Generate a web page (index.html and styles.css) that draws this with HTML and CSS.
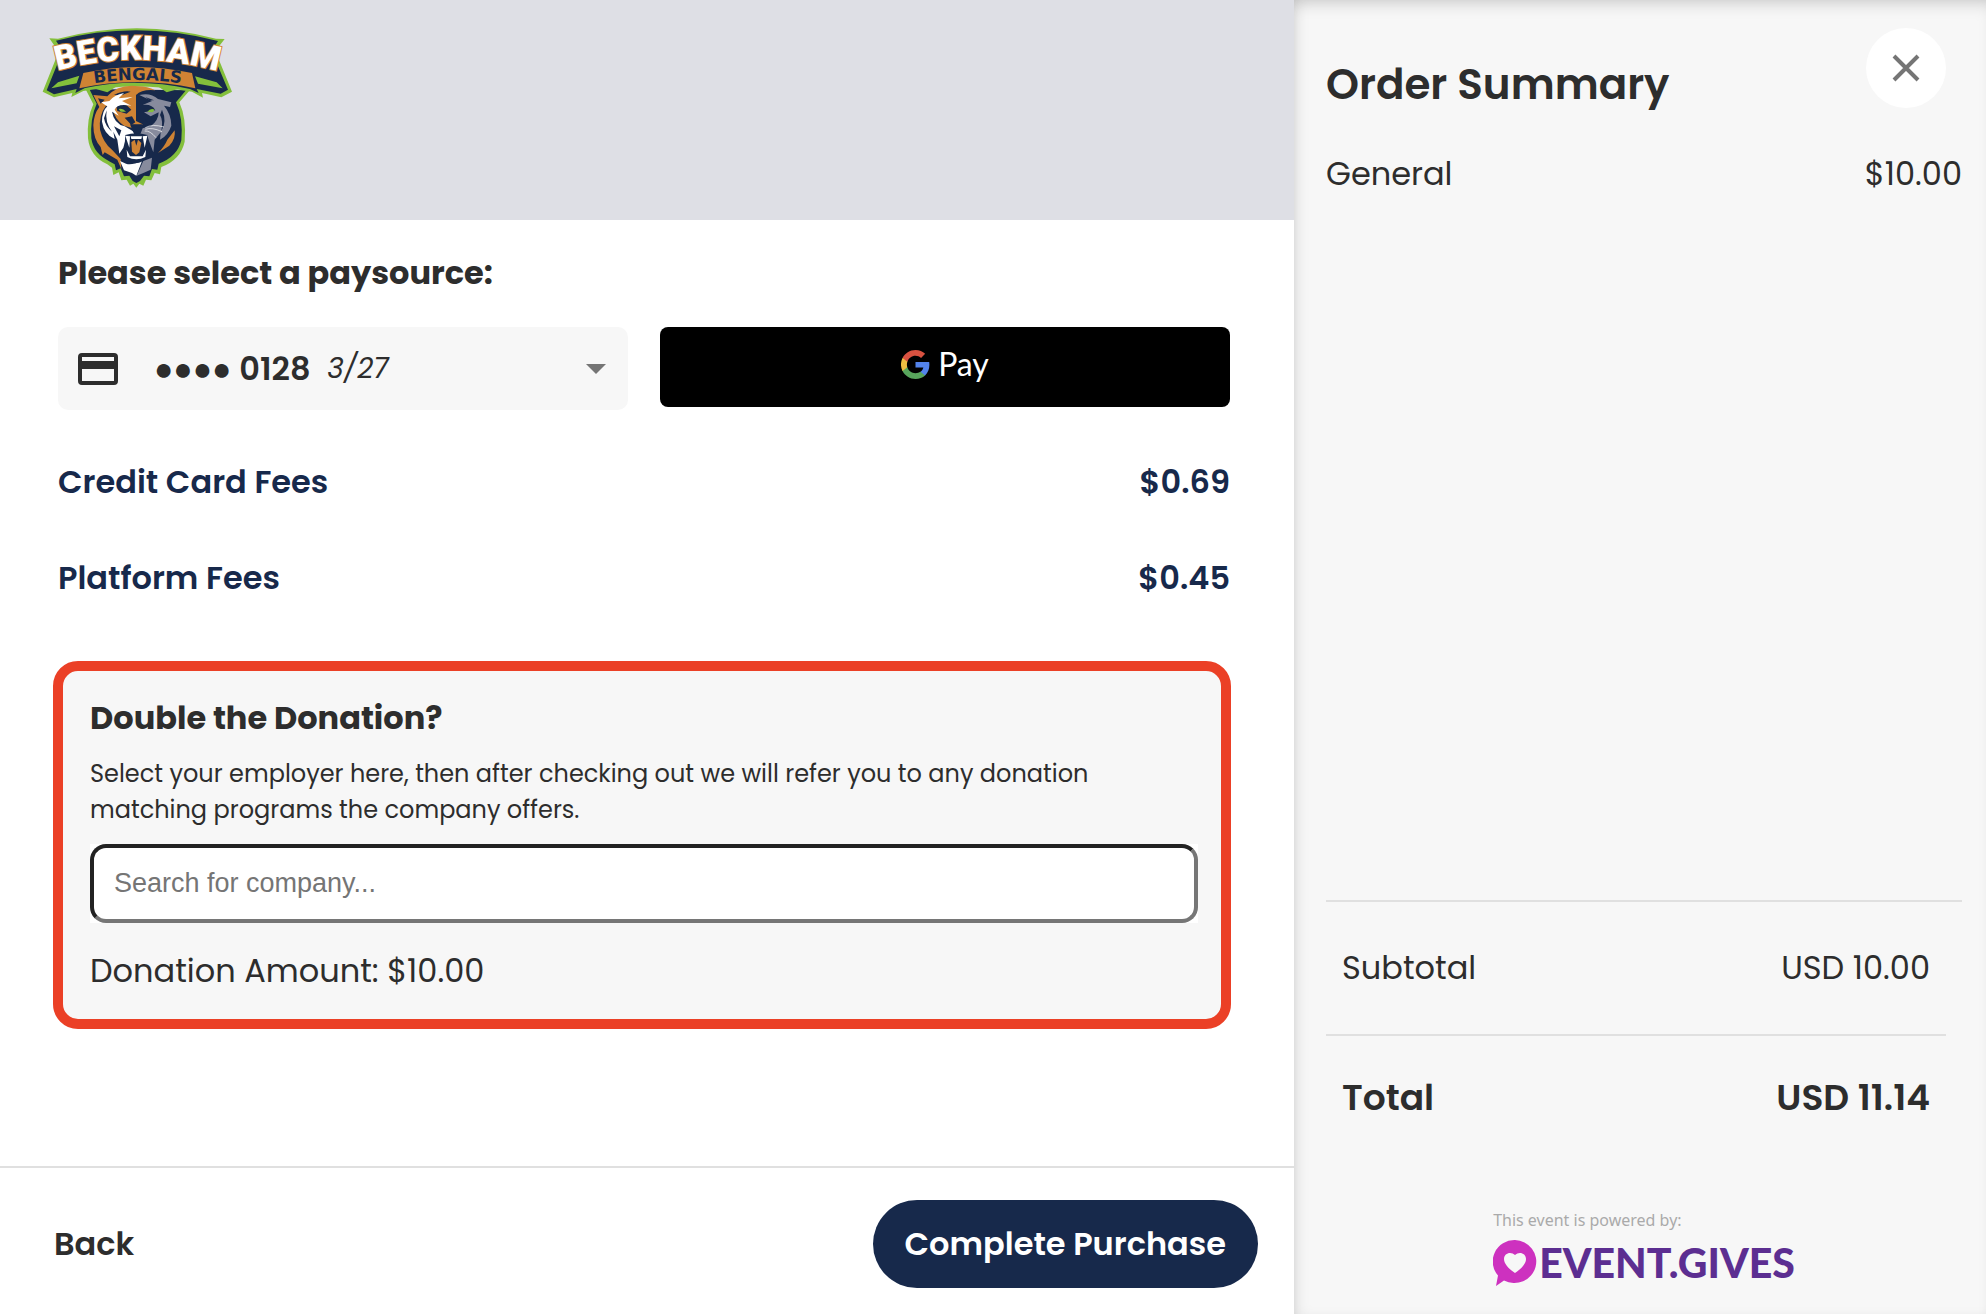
FILE: index.html
```html
<!DOCTYPE html>
<html lang="en">

<head>
    <meta charset="UTF-8">
    <meta name="viewport" content="width=device-width, initial-scale=1.0">
    <title>Checkout</title>
    <link rel="stylesheet" href="styles.css">
</head>

<body>
    <div class="checkout">
        <div class="payment">
            <header class="banner">
                <svg class="team-logo" viewBox="0 0 660 555" role="img" aria-label="Beckham Bengals">
                    <!-- head outline -->
                    <path fill="#83bf3b" d="M168 225 L190 268 Q170 310 174 370 Q180 425 232 448 L246 458 L250 480 L266 472 L274 496 L290 494 L300 512 L310 506 L319 518 L328 506 L340 512 L348 494 L364 496 L374 474 L390 478 L394 456 Q452 434 464 380 Q470 310 448 262 L480 225Z" />
                    <path fill="#17294b" d="M178 222 L200 266 Q180 310 184 370 Q190 416 240 440 L254 448 L258 466 L272 460 L282 484 L298 482 L308 498 L319 504 L330 498 L342 482 L358 484 L366 462 L382 464 L386 446 Q442 426 454 376 Q460 310 438 262 L468 226Z" />
                    <!-- banner -->
                    <path fill="#83bf3b" d="M58 70 L84 71 Q320 8 558 71 L584 72 L556 108 L606 230 L574 247 L516 234 L519 248 L486 230 Q320 200 160 228 L124 246 L127 234 L72 247 L38 230 L86 110Z" />
                    <path fill="#17294b" d="M78 77 Q320 14 564 78 L545 108 L594 224 L572 236 L500 222 L506 234 L480 222 Q320 186 165 219 L136 234 L140 222 L72 238 L50 226 L98 108Z" />
                    <path fill="#83bf3b" d="M84 202 L148 182 L140 205 L64 220Z M495 184 L560 202 L578 220 L504 206Z M190 220 L270 208 L232 232Z M374 208 L452 220 L410 232Z" />
                    <path fill="#cf8334" d="M160 174 Q320 138 486 174 L496 220 Q320 182 148 220Z" />
                    <path id="arc-top" fill="none" d="M80 168 Q320 100 566 170" />
                    <path id="arc-bottom" fill="none" d="M156 212 Q320 178 490 212" />
                    <text class="logo-name"><textPath href="#arc-top" startOffset="50%">BECKHAM</textPath></text>
                    <text class="logo-team"><textPath href="#arc-bottom" startOffset="50%">BENGALS</textPath></text>
                    <!-- orange half -->
                    <path fill="#cf8334" d="M190 240 L232 244 Q266 206 326 214 Q352 214 376 226 Q336 222 318 240 L318 318 L338 328 L322 352 L304 338 L282 332 Q252 312 250 282 L228 272 Q206 300 210 344 Q220 384 246 404 L272 432 L274 462 L262 434 L224 412 L218 420 L212 396 Q190 372 190 330 Q192 296 208 276Z" />
                    <path fill="#17294b" d="M204 250 L224 254 L212 266Z M252 240 Q280 226 302 230 L276 240Z M256 262 Q284 260 304 284 L290 296 L262 288Z M284 308 L306 304 L316 322 L304 330Z" />
                    <!-- white half -->
                    <path fill="#fff" d="M222 268 L214 262 L238 258 Q252 240 282 234 L266 250 L308 246 L276 258 L304 272 Q260 264 254 284 L266 302 L246 290 Q252 326 284 334 L308 348 L314 360 L290 362 L280 398 L268 416 L262 374 L250 350 L254 372 Q222 358 216 320 Q216 288 232 274Z" />
                    <path fill="#17294b" d="M230 286 Q224 322 246 350 Q226 334 222 310Z M252 334 L274 346 L268 364Z" />
                    <path fill="#fff" d="M270 438 L288 446 Q304 452 336 438 L319 482 L306 474 L282 466Z" />
                    <!-- grey half -->
                    <path fill="#878b9d" d="M328 240 Q362 232 384 252 L424 262 L420 276 L402 272 Q424 298 424 332 Q414 362 390 374 L392 352 L374 374 L370 412 L358 380 L352 362 L330 360 L338 340 L362 334 Q386 316 386 292 L362 304 L342 292 L376 286 Q366 266 338 270 L366 258Z M340 438 L366 428 L362 464 L340 474 L320 482Z" />
                    <path fill="#17294b" d="M346 246 L372 256 L358 256Z M396 284 Q412 320 394 348 Q400 316 390 300Z M346 314 L370 304 L356 326Z" />
                    <path fill="#cf8334" d="M434 346 Q438 372 418 392 L384 414 Q404 394 412 374Z" />
                    <path fill="none" stroke="#fff" stroke-width="2" d="M346 338 Q366 326 402 336 M346 343 Q366 336 396 350 M344 348 Q360 346 378 368" />
                    <path fill="#83bf3b" d="M266 282 Q278 278 288 290 L272 290Z M352 290 Q362 278 374 284 L368 292Z" />
                    <!-- mouth -->
                    <path fill="#17294b" d="M300 328 L338 328 L330 348 L319 356 L308 348Z M286 360 Q319 350 352 360 L358 420 Q340 444 319 444 Q296 444 282 420Z" />
                    <path fill="#cf8334" d="M304 382 L314 374 L319 392 L324 374 L334 384 L328 412 L318 420 L306 410Z" />
                    <path fill="#fff" d="M286 362 L300 364 L298 398Z M338 364 L352 362 L344 398Z M302 364 L336 364 L334 372 L304 372Z M290 404 L300 424 L338 424 L348 404 L346 426 Q319 440 292 426Z" />
                </svg>
            </header>

            <main class="content">
                <label class="heading" for="paysource">Please select a paysource:</label>
                <div class="pay-row">
                    <div class="pay-select">
                        <svg class="card-icon" viewBox="0 0 40 32" aria-hidden="true">
                            <path fill="#2d2d2d" fill-rule="evenodd" d="M4 0H36A4 4 0 0 1 40 4V28A4 4 0 0 1 36 32H4A4 4 0 0 1 0 28V4A4 4 0 0 1 4 0ZM4 4V8H36V4ZM4 16V28H36V16Z" />
                        </svg>
                        <span class="dots">●●●●</span>
                        <select id="paysource">
                            <option>0128</option>
                        </select>
                        <em class="expiry">3/27</em>
                        <svg class="caret" viewBox="0 0 20 10" aria-hidden="true">
                            <path fill="#757575" d="M0 0H20L10 10Z" />
                        </svg>
                    </div>
                    <button class="gpay" type="button">
                        <svg class="google-icon" viewBox="0 0 48 48" aria-hidden="true">
                            <path fill="#5383ec" d="M47 24.5c0-1.600-.2-3.200-.4-4.600H24v9h13c-.6 3-2.300 5.500-4.800 7.200v6h7.700C44.400 38 47 31.800 47 24.500z" />
                            <path fill="#58a55c" d="M24 48c6.500 0 11.900-2.100 15.900-5.800l-7.700-6c-2.200 1.400-4.900 2.300-8.200 2.300-6.300 0-11.600-4.200-13.500-9.900h-8v6.200C6.500 42.600 14.600 48 24 48z" />
                            <path fill="#f1bf42" d="M10.500 28.600c-1-3-1-6.200 0-9.200v-6.200h-8c-3.400 6.800-3.400 14.800 0 21.600z" />
                            <path fill="#d85140" d="M24 9.500c3.500 0 6.700 1.200 9.200 3.600l6.800-6.800C35.900 2.400 30.500 0 24 0 14.600 0 6.500 5.400 2.500 13.200l8 6.200c1.900-5.700 7.200-9.900 13.500-9.900z" />
                        </svg>
                        <span>Pay</span>
                    </button>
                </div>

                <div class="fee"><span>Credit Card Fees</span><span>$0.69</span></div>
                <div class="fee"><span>Platform Fees</span><span>$0.45</span></div>

                <section class="donation">
                    <h2 class="heading">Double the Donation?</h2>
                    <p class="hint">Select your employer here, then after checking out we will refer you to any donation matching programs the company offers.</p>
                    <div class="search">
                        <input type="text" placeholder="Search for company..." aria-label="Search for company">
                    </div>
                    <p class="amount">Donation Amount: $10.00</p>
                </section>
            </main>

            <footer class="actions">
                <button class="back" type="button">Back</button>
                <button class="complete" type="button">Complete Purchase</button>
            </footer>
        </div>

        <aside class="summary">
            <div class="summary-head">
                <h1>Order Summary</h1>
                <button class="close" type="button" aria-label="Close">
                    <svg viewBox="0 0 28 28" aria-hidden="true">
                        <path fill="none" stroke="#757575" stroke-width="4" d="M2 2L26 26M26 2L2 26" />
                    </svg>
                </button>
            </div>
            <div class="line-item"><span>General</span><span>$10.00</span></div>

            <div class="totals">
                <div class="subtotal"><span>Subtotal</span><span>USD 10.00</span></div>
                <div class="total"><span>Total</span><span>USD 11.14</span></div>
            </div>

            <div class="powered">
                <p>This event is powered by:</p>
                <a class="brand" href="#">
                    <svg viewBox="0 0 44 46" aria-hidden="true">
                        <path fill="#cd31bf" d="M22 0A22 21.500 0 1 1 11 40.500L3 46L5 35.500A22 21.500 0 0 1 22 0Z" />
                        <path fill="#f7f7f7" d="M22 33C16 29 11 24 11 19C11 13 18 11 22 15C26 11 33 13 33 19C33 24 28 29 22 33Z" />
                    </svg>
                    <span>EVENT.GIVES</span>
                </a>
            </div>
        </aside>
    </div>
</body>

</html>
```

FILE: styles.css
```css
* {
    box-sizing: border-box;
    margin: 0;
    padding: 0;
}

body {
    font-family: Poppins, "Open Sans", sans-serif;
    font-size: 32px;
    line-height: 48px;
    color: #2d2d2d;
    background-color: #fff;
}

button,
select {
    font: inherit;
    color: inherit;
    border: 0;
    background: none;
    cursor: pointer;
}

.checkout {
    display: grid;
    grid-template-columns: minmax(0, 1fr) 692px;
    min-height: 100vh;
}

/* left side */
.payment {
    display: flex;
    flex-direction: column;
}

.banner {
    height: 220px;
    padding: 15px 30px;
    background-color: #dedfe5;
}

.team-logo {
    display: block;
    width: 220px;
    height: 185px;
}

.logo-name {
    font-family: Roboto, sans-serif;
    font-size: 102px;
    font-weight: 900;
    text-anchor: middle;
    fill: #fff;
    stroke: #cf8334;
    stroke-width: 6px;
    paint-order: stroke;
}

.logo-team {
    font-family: "DejaVu Sans", sans-serif;
    font-size: 50px;
    font-weight: bold;
    text-anchor: middle;
    fill: #17294b;
}

.content {
    padding: 29px 64px 48px 58px;
}

.heading {
    display: block;
    font-size: 32px;
    font-weight: 700;
    line-height: 48px;
}

.pay-row {
    display: grid;
    grid-template-columns: 1fr 1fr;
    align-items: start;
    gap: 32px;
    margin-top: 30px;
}

.pay-select {
    display: flex;
    align-items: center;
    height: 83px;
    padding: 0 22px 0 20px;
    border-radius: 10px;
    background-color: #f7f7f7;
}

.card-icon {
    width: 40px;
    height: 32px;
    margin-right: 36px;
}

.dots {
    margin-right: 8px;
}

.pay-select select {
    appearance: none;
    font-weight: 600;
}

.expiry {
    margin-left: 16px;
    font-size: 28px;
}

.caret {
    width: 20px;
    height: 10px;
    margin-left: auto;
}

.gpay {
    display: flex;
    align-items: center;
    justify-content: center;
    gap: 8px;
    height: 80px;
    padding-bottom: 6px;
    border-radius: 8px;
    background-color: #000;
    color: #fff;
    font-family: Lato, sans-serif;
    font-size: 32px;
}

.google-icon {
    width: 29px;
    height: 29px;
}

.fee {
    display: flex;
    justify-content: space-between;
    margin-top: 48px;
    font-weight: 600;
    color: #17294b;
}

.donation {
    margin: 59px -1px 0 -5px;
    padding: 23px 23px 24px 27px;
    border: 10px solid #eb4026;
    border-radius: 25px;
    background-color: #f7f7f7;
}

.hint {
    margin-top: 14px;
    font-size: 24px;
    line-height: 36px;
}

.search {
    margin: 16px 0 24px;
    background-color: #fff;
}

.search input {
    display: block;
    width: 100%;
    height: 79px;
    padding: 0 20px;
    border: 4px solid;
    border-color: #222 #767676 #767676 #222;
    border-radius: 16px;
    font-family: "Liberation Sans", sans-serif;
    font-size: 27px;
}

.search input::placeholder {
    color: #757575;
}

.actions {
    display: flex;
    align-items: center;
    justify-content: space-between;
    margin-top: auto;
    padding: 32px 36px 26px 54px;
    border-top: 2px solid #e0e0e0;
    font-weight: 600;
}

.complete {
    height: 88px;
    padding: 0 32px;
    border-radius: 44px;
    background-color: #17294b;
    color: #fff;
}

/* right side */
.summary {
    display: flex;
    flex-direction: column;
    padding: 28px 24px 28px 32px;
    background-color: #f7f7f7;
    box-shadow: inset 8px 0 16px -8px rgba(0, 0, 0, 0.15), inset 0 12px 16px -8px rgba(0, 0, 0, 0.15);
}

.summary-head {
    display: flex;
    justify-content: space-between;
    padding-right: 16px;
}

.summary-head h1 {
    padding-top: 27px;
    font-size: 42px;
    font-weight: 600;
    line-height: 60px;
}

.close {
    display: flex;
    align-items: center;
    justify-content: center;
    width: 80px;
    height: 80px;
    border-radius: 50%;
    background-color: #fff;
}

.close svg {
    width: 28px;
    height: 28px;
}

.line-item,
.subtotal,
.total {
    display: flex;
    justify-content: space-between;
}

.line-item {
    margin-top: 35px;
}

.totals {
    margin-top: auto;
    border-top: 2px solid #e0e0e0;
}

.subtotal,
.total {
    margin-right: 16px;
    padding: 42px 16px;
}

.total {
    padding-top: 38px;
    border-top: 2px solid #e0e0e0;
    font-size: 36px;
    font-weight: 600;
}

.powered {
    align-self: center;
    margin-top: 44px;
    color: #aaa;
    font-family: "Noto Sans", sans-serif;
    font-size: 16px;
    line-height: 24px;
}

.brand {
    display: flex;
    align-items: center;
    gap: 2px;
    margin-top: 8px;
    color: #5c2e91;
    font-family: Lato, sans-serif;
    font-size: 41px;
    font-weight: 900;
    line-height: 46px;
    text-decoration: none;
}

.brand svg {
    width: 44px;
    height: 46px;
}
```
